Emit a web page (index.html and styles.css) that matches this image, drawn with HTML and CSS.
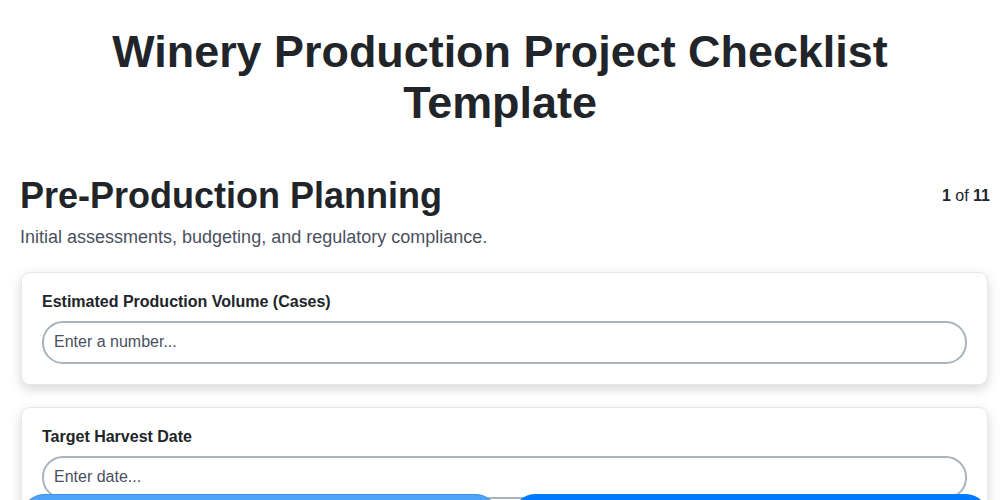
FILE: index.html
```html
<!DOCTYPE html>
<html lang="en">
<head>
    <meta charset="UTF-8">
    <meta name="viewport" content="width=device-width, initial-scale=1.0">
    <title>Winery Production Project Checklist Template</title>
    <link rel="stylesheet" href="styles.css">
</head>
<body>
    <div class="page">
        <h1 class="page-title">Winery Production Project Checklist Template</h1>

        <!-- Current Section -->
        <section class="section">
            <div class="section-header">
                <h2 class="section-title">Pre-Production Planning</h2>
                <span class="step-count"><strong>1</strong> of <strong>11</strong></span>
            </div>
            <p class="section-description">Initial assessments, budgeting, and regulatory compliance.</p>

            <div class="field-card">
                <label class="field-label" for="volume">Estimated Production Volume (Cases)</label>
                <input class="field-input" id="volume" type="text" placeholder="Enter a number...">
            </div>

            <div class="field-card">
                <label class="field-label" for="harvest">Target Harvest Date</label>
                <input class="field-input" id="harvest" type="text" placeholder="Enter date...">
            </div>
        </section>
    </div>

    <!-- Navigation -->
    <nav class="nav-bar">
        <button class="nav-button nav-prev">Previous</button>
        <button class="nav-button nav-next">Next</button>
    </nav>
</body>
</html>
```

FILE: styles.css
```css
/* Variables */
:root {
    --text-primary: #212529;
    --text-secondary: #4a5060;
    --border: #e6e8eb;
    --input-border: #a9b3bb;
    --primary: #007bff;
    --primary-light: #4da3f8;
}

/* Base Styles */
* {
    margin: 0;
    padding: 0;
    box-sizing: border-box;
}

body {
    font-family: "Liberation Sans", Arial, sans-serif;
    color: var(--text-primary);
    background: #ffffff;
    overflow: hidden;
}

.page {
    padding: 26px 10px 0 20px;
}

/* Typography */
.page-title {
    font-size: 44.9px;
    font-weight: 700;
    text-align: center;
    line-height: 51px;
    padding: 0 80px;
    margin: 0 0 47px -10px;
}

.section-header {
    display: flex;
    align-items: center;
    justify-content: space-between;
}

.section-title {
    font-size: 36px;
    font-weight: 700;
    line-height: 41px;
}

.step-count {
    font-size: 16px;
}

.section-description {
    font-size: 18px;
    color: var(--text-secondary);
    line-height: 21px;
    margin-top: 11px;
    margin-bottom: 24px;
}

/* Field Cards */
.field-card {
    background: #ffffff;
    border: 1px solid var(--border);
    border-radius: 9px;
    box-shadow: 0 4px 12px rgb(0 0 0 / 0.16);
    padding: 19px 20px 20px 20px;
    margin: 0 2px 22px 1px;
    display: flex;
    flex-direction: column;
}

.field-label {
    font-size: 16px;
    font-weight: 700;
    line-height: 19px;
    margin-bottom: 10px;
}

.field-input {
    font-family: inherit;
    font-size: 16px;
    color: var(--text-primary);
    border: 2px solid var(--input-border);
    border-radius: 21px;
    padding: 10px 10px 11px;
    line-height: 18px;
    outline: none;
}

.field-input::placeholder {
    color: #4a5060;
}

/* Navigation */
.nav-bar {
    position: fixed;
    left: 22px;
    right: 12px;
    bottom: -60px;
    display: flex;
    gap: 15px;
}

.nav-button {
    flex: 1;
    height: 66px;
    border: none;
    border-radius: 22px;
    color: #ffffff;
    font-family: inherit;
    font-size: 16px;
    font-weight: 700;
}

.nav-prev {
    background: var(--primary-light);
    border-top: 1px solid #3b8fe6;
}

.nav-next {
    background: var(--primary);
}
```
